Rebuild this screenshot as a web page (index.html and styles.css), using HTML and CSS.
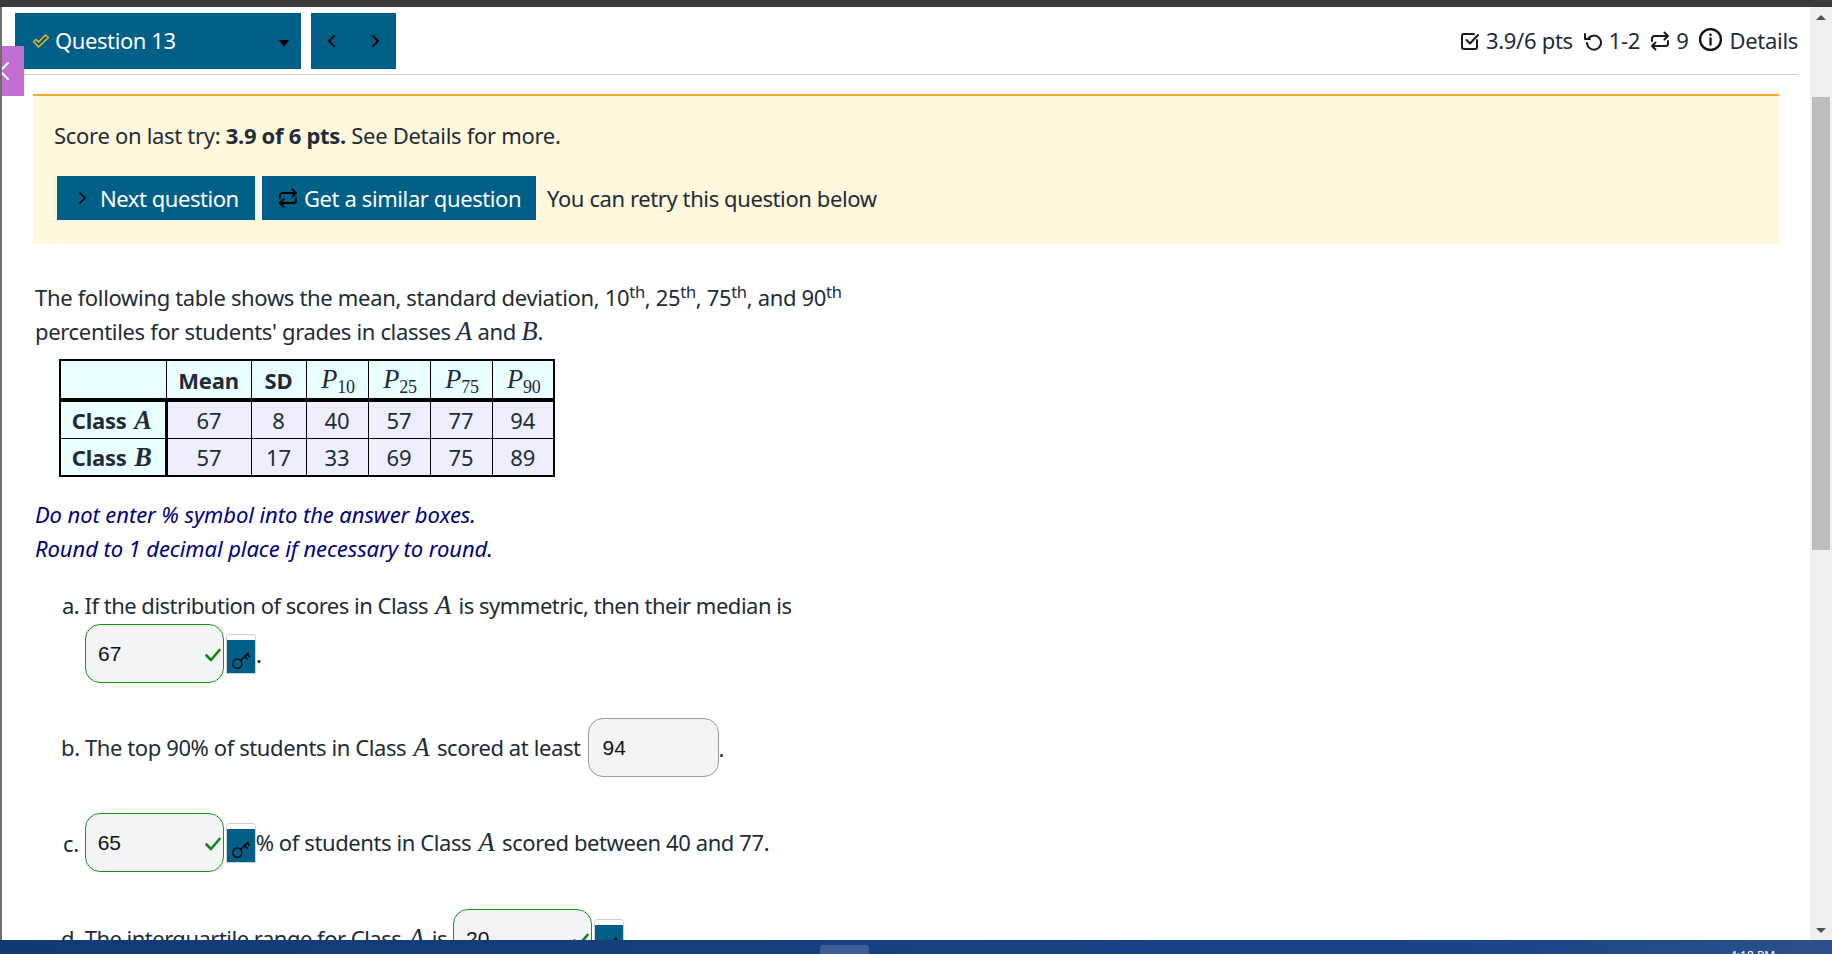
FILE: index.html
```html
<!DOCTYPE html>
<html lang="en">
<head>
<meta charset="utf-8">
<title>Question 13</title>
<link rel="stylesheet" href="styles.css">
</head>
<body>
<div class="top-strip"></div>
<div class="window">
  <div class="edge"></div>
  <main class="page">
    <div class="side-tab"><svg class="ic-side" viewBox="0 0 12 24"><path d="M8 4 L0 12 L8 20"/></svg></div>
    <header class="bar">
      <div class="bar-left">
        <div class="qselect">
          <svg class="ic-dbl" viewBox="0 0 18 16"><path d="M1.500 8.500 L4 6.500 L6.500 9 L13.500 2 L16.500 4.500 L6.500 14 Z"/></svg>
          <span class="qname">Question 13</span>
          <span class="caret"></span>
        </div>
        <div class="qnav">
          <svg class="ic-chev" viewBox="0 0 10 16"><path d="M7 3 L2 8 L7 13"/></svg>
          <svg class="ic-chev" viewBox="0 0 10 16"><path d="M3 3 L8 8 L3 13"/></svg>
        </div>
      </div>
      <div class="bar-right">
        <svg class="ic-meta" viewBox="0 0 20 20"><path d="M17 9 V16 a2 2 0 0 1 -2 2 H4 a2 2 0 0 1 -2 -2 V5 a2 2 0 0 1 2 -2 H14 M6.500 9 L10 12.500 L18 4"/></svg>
        <span class="meta-text">3.9/6 pts</span>
        <svg class="ic-meta gap-l" viewBox="0 0 20 20"><path d="M5 8 A7 7 0 1 1 4 12 M2 3 V8 H7"/></svg>
        <span class="meta-text">1-2</span>
        <svg class="ic-meta gap-l" viewBox="0 0 20 20"><path d="M2 10 V7.500 a2.500 2.500 0 0 1 2.500 -2.500 H18 M14.500 1.500 L18 5 L14.500 8.500 M18 10 V12.500 a2.500 2.500 0 0 1 -2.500 2.500 H2 M5.500 11.500 L2 15 L5.500 18.500"/></svg>
        <span class="meta-text">9</span>
        <svg class="ic-info" viewBox="0 0 24 24"><circle cx="12" cy="12" r="10"/><path d="M12 11 V17"/><circle class="dot" cx="12" cy="7.500" r="1.300"/></svg>
        <span class="meta-text">Details</span>
      </div>
    </header>

    <section class="alert">
      <p class="score">Score on last try: <b>3.9 of 6 pts.</b> See Details for more.</p>
      <div class="actions">
        <div class="btn btn-next"><svg class="ic-chev-sm" viewBox="0 0 10 16"><path d="M3 3 L8 8 L3 13"/></svg><span>Next question</span></div>
        <div class="btn btn-similar"><svg class="ic-btn" viewBox="0 0 20 20"><path d="M2 10 V7.500 a2.500 2.500 0 0 1 2.500 -2.500 H18 M14.500 1.500 L18 5 L14.500 8.500 M18 10 V12.500 a2.500 2.500 0 0 1 -2.500 2.500 H2 M5.500 11.500 L2 15 L5.500 18.500"/></svg><span>Get a similar question</span></div>
        <span class="retry">You can retry this question below</span>
      </div>
    </section>

    <section class="question">
      <p class="intro">The following table shows the mean, standard deviation, 10<sup>th</sup>, 25<sup>th</sup>, 75<sup>th</sup>, and 90<sup>th</sup><br>percentiles for students' grades in classes <i class="m">A</i> and <i class="m">B</i>.</p>
      <table class="stats">
        <thead>
          <tr>
            <th class="c0"></th><th class="c1">Mean</th><th class="c2">SD</th>
            <th class="c3"><i class="m">P</i><sub>10</sub></th><th class="c3"><i class="m">P</i><sub>25</sub></th><th class="c3"><i class="m">P</i><sub>75</sub></th><th class="c3"><i class="m">P</i><sub>90</sub></th>
          </tr>
        </thead>
        <tbody>
          <tr><th>Class <i class="m">A</i></th><td>67</td><td>8</td><td>40</td><td>57</td><td>77</td><td>94</td></tr>
          <tr><th>Class <i class="m">B</i></th><td>57</td><td>17</td><td>33</td><td>69</td><td>75</td><td>89</td></tr>
        </tbody>
      </table>
      <p class="note">Do not enter % symbol into the answer boxes.<br>Round to 1 decimal place if necessary to round.</p>

      <div class="part part-a">
        <p class="part-line">a. If the distribution of scores in Class <i class="m">A</i> is symmetric, then their median is</p>
        <div class="ans-line ans-a">
          <div class="answer ok"><span>67</span><svg class="ic-ok" viewBox="0 0 16 14"><path d="M1.500 7.500 L6 12 L14.500 2"/></svg></div>
          <div class="key"><svg class="ic-key" viewBox="0 0 22 22"><circle cx="7" cy="15" r="5"/><path d="M10.500 11.500 L19 3.500 M15 7 L18 10 M18 4.500 L20 7"/></svg></div><span>.</span>
        </div>
      </div>

      <div class="ans-line part-b">
        <span class="lead">b. The top 90% of students in Class <i class="m">A</i> scored at least</span>
        <div class="answer plain"><span>94</span></div><span>.</span>
      </div>

      <div class="ans-line part-c">
        <span class="lead">c.</span>
        <div class="answer ok"><span>65</span><svg class="ic-ok" viewBox="0 0 16 14"><path d="M1.500 7.500 L6 12 L14.500 2"/></svg></div>
        <div class="key"><svg class="ic-key" viewBox="0 0 22 22"><circle cx="7" cy="15" r="5"/><path d="M10.500 11.500 L19 3.500 M15 7 L18 10 M18 4.500 L20 7"/></svg></div>
        <span>% of students in Class <i class="m">A</i> scored between 40 and 77.</span>
      </div>

      <div class="ans-line part-d">
        <span class="lead">d. The interquartile range for Class <i class="m">A</i> is</span>
        <div class="answer ok"><span>20</span><svg class="ic-ok" viewBox="0 0 16 14"><path d="M1.500 7.500 L6 12 L14.500 2"/></svg></div>
        <div class="key"><svg class="ic-key" viewBox="0 0 22 22"><circle cx="7" cy="15" r="5"/><path d="M10.500 11.500 L19 3.500 M15 7 L18 10 M18 4.500 L20 7"/></svg></div>
      </div>
    </section>
  </main>
  <aside class="scrollbar">
    <span class="arrow up"></span>
    <div class="track"><div class="thumb"></div></div>
    <span class="arrow down"></span>
  </aside>
</div>
<footer class="taskbar"><div class="task-item"></div><span class="clock">4:18 PM</span></footer>
</body>
</html>
```
FILE: styles.css
```css
* { box-sizing: border-box; }
html, body { margin: 0; height: 100%; }
body {
  width: 1832px; height: 954px; overflow: hidden; display: flex; flex-direction: column;
  font-family: "Noto Sans", "Open Sans", sans-serif; font-size: 22px; letter-spacing: -0.4px; color: #212b36; background: #fff;
}
p { margin: 0; }
svg { fill: none; stroke: currentColor; stroke-linecap: round; stroke-linejoin: round; flex: none; }
.top-strip { height: 7px; background: #3a3a3a; flex: none; }
.window { flex: 1; min-height: 0; display: flex; }
.edge { width: 2px; background: #6e6e6e; flex: none; }
.page { flex: 1; min-width: 0; position: relative; overflow: hidden; background: #fff; padding-top: 6px; }
.side-tab { position: absolute; left: -2px; top: 39px; width: 24px; height: 50px; background: #c36fd1; color: #fff; display: flex; align-items: center; }
.ic-side { width: 12px; height: 24px; stroke-width: 2; }
.bar { margin: 0 12px 0 13px; height: 62px; padding-bottom: 5px; border-bottom: 1px solid #ccc; display: flex; justify-content: space-between; }
.bar-left { display: flex; gap: 10px; }
.qselect { width: 286px; background: #005f86; color: #fff; display: flex; align-items: center; padding: 0 12px 0 17px; }
.ic-dbl { width: 18px; height: 16px; color: #f2b824; stroke-width: 1.500; margin-right: 5px; }
.qname { flex: 1; padding-bottom: 2px; }
.caret { width: 0; height: 0; border-left: 5px solid transparent; border-right: 5px solid transparent; border-top: 7px solid #000; margin-top: 4px; }
.qnav { width: 85px; background: #005f86; color: #000; display: flex; align-items: center; justify-content: space-between; padding: 0 16px; }
.ic-chev { width: 10px; height: 16px; stroke-width: 1.8; }
.bar-right { display: flex; align-items: center; gap: 6px; color: #1f2a37; letter-spacing: -0.3px; }
.meta-text { padding-bottom: 2px; }
.ic-meta { width: 20px; height: 20px; stroke-width: 2; color: #1a1a1a; }
.gap-l { margin-left: 4px; }
.ic-info { width: 25px; height: 25px; stroke-width: 2.200; color: #111; margin-left: 4px; margin-bottom: 3px; }
.ic-info .dot { fill: #111; stroke: none; }
.alert { margin: 19px 31px 0; height: 150px; border-top: 2px solid #ffa733; background: #fff8dc; padding: 24px 0 0 21px; }
.score { line-height: 30px; letter-spacing: -0.3px; }
.actions { margin-top: 26px; margin-left: 3px; display: flex; align-items: center; gap: 7px; }
.btn { height: 44px; background: #005f86; color: #fff; display: flex; align-items: center; }
.btn-next { width: 198px; padding-left: 20px; letter-spacing: -0.45px; }
.btn-similar { width: 274px; padding-left: 16px; }
.ic-chev-sm { width: 10px; height: 16px; color: #000; stroke-width: 1.6; margin-right: 13px; }
.ic-btn { width: 20px; height: 20px; color: #000; stroke-width: 2; margin-right: 6px; }
.retry { margin-left: 4px; }
.question { padding: 36px 0 0 33px; }
.intro { line-height: 34px; letter-spacing: -0.33px; }
.intro .m { margin: 0; }
sup { font-size: 75%; line-height: 0; }
.m { font-family: "Liberation Serif", serif; font-style: italic; font-size: 1.2em; letter-spacing: 0; margin: 0 2px; }
.stats { margin: 11px 0 0 24px; border-collapse: collapse; border: 2px solid #000; table-layout: fixed; width: 495px; height: 118px; text-align: center; letter-spacing: -0.2px; }
.stats th, .stats td { border: 1px solid #000; padding: 0; font-weight: 400; }
.stats thead th { background: #eaffff; border-bottom: 4px solid #000; font-weight: 700; height: 40px; }
.stats tbody th { background: #eaffff; font-weight: 700; border-right: 3px solid #000; }
.stats td { background: #eeeefc; }
.stats thead th.c3 { font-weight: 400; }
.stats thead th.c0 { border-right: 1px solid #000; }
.stats sub { font-family: "Liberation Serif", serif; font-size: 18px; line-height: 0; margin-left: -2px; }
.c0 { width: 106px; } .c1 { width: 85px; } .c2 { width: 55px; } .c3 { width: 62px; }
.note { margin-top: 20px; line-height: 34px; color: #000080; font-style: italic; letter-spacing: -0.08px; }
.part-a { margin: 23px 0 0 27px; }
.part-line { line-height: 34px; letter-spacing: -0.5px; }
.ans-line { display: flex; align-items: center; }
.ans-a { margin: 2px 0 0 23px; }
.answer { width: 139px; height: 59px; border-radius: 15px; background: #f3f4f6; border: 1px solid #1a921a; display: flex; align-items: center; justify-content: space-between; padding: 0 2px 0 12px; font-family: "Liberation Sans", sans-serif; font-size: 21px; letter-spacing: 0; color: #111; }
.answer.plain { border-color: #9a9a9a; width: 131px; padding-left: 14px; }
.ic-ok { width: 16px; height: 14px; color: #128212; stroke-width: 2.600; margin-top: 3px; }
.key { width: 30px; height: 39px; margin: 2px 0 0 2px; background: #005f86; border: 1px solid #cfcfcf; border-top: 5px solid #fff; color: #0a0a0a; display: flex; align-items: flex-end; justify-content: center; padding-bottom: 3px; box-shadow: 0 -1px 0 #cfcfcf; border-radius: 4px 4px 0 0; }
.ic-key { width: 20px; height: 20px; stroke-width: 1.700; }
.part-b { margin: 35px 0 0 26px; }
.part-b .lead { margin-right: 7px; }
.part-c { margin: 36px 0 0 28px; }
.part-c .lead { margin-right: 6px; }
.part-d { margin: 37px 0 0 26px; letter-spacing: -0.5px; }
.part-d .lead { margin-right: 6px; }
.scrollbar { width: 22px; background: #f0f0f0; display: flex; flex-direction: column; align-items: center; flex: none; padding-top: 8px; }
.arrow { width: 0; height: 0; border-left: 5px solid transparent; border-right: 5px solid transparent; flex: none; }
.arrow.up { border-bottom: 5px solid #505050; }
.arrow.down { border-top: 5px solid #505050; margin-bottom: 7px; }
.track { flex: 1; width: 100%; padding: 0 2px; margin-top: 7px; }
.thumb { height: 453px; margin-top: 70px; background: #bdbdbd; }
.taskbar { height: 14px; flex: none; background: linear-gradient(90deg, #113a75 0%, #16407f 50%, #1a4487 80%, #2b4f8b 100%); display: flex; position: relative; overflow: hidden; }
.task-item { position: absolute; left: 820px; top: 5px; width: 49px; height: 12px; background: #3b5f95; border-radius: 3px 3px 0 0; }
.clock { position: absolute; left: 1730px; top: 9px; color: #fff; font-family: "Noto Sans", sans-serif; font-size: 12px; line-height: 14px; letter-spacing: 0; }
```
